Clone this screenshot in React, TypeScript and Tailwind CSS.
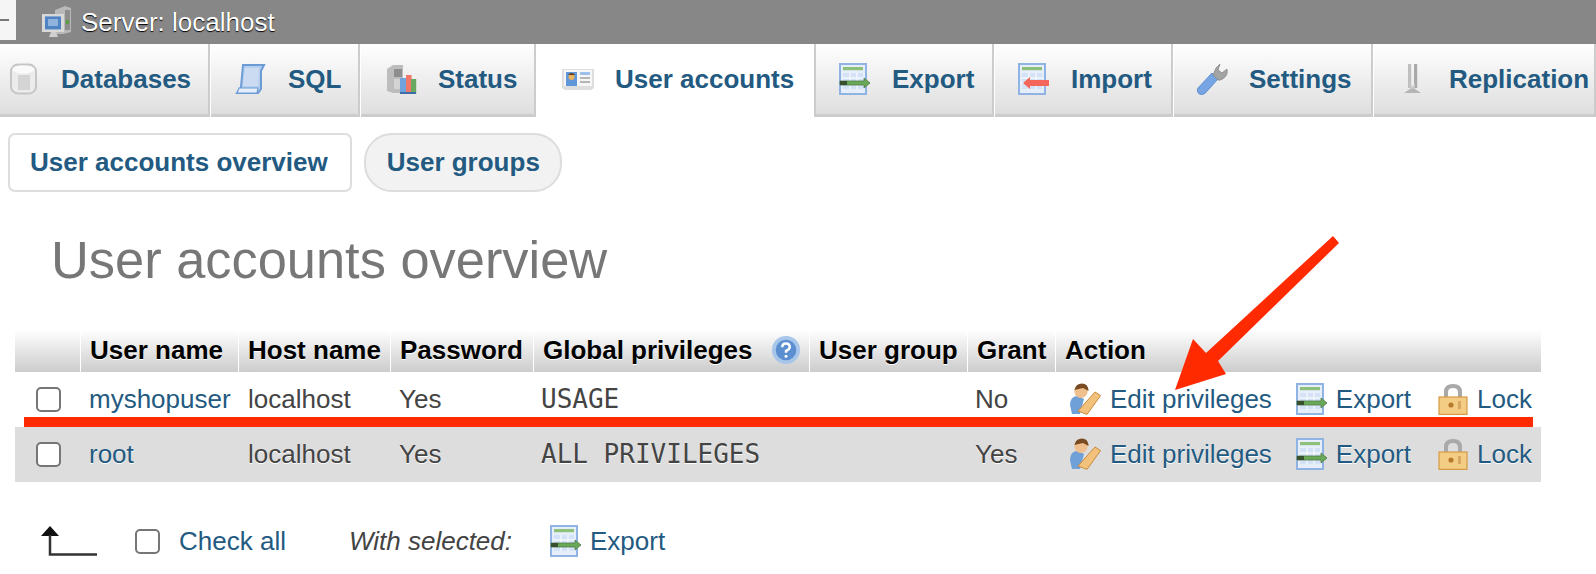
import type { ReactNode } from "react";

const LINK = "text-[#235a81]";

function Svg({ children, className = "" }: { children: ReactNode; className?: string }) {
  return (
    <svg viewBox="0 0 16 16" className={`w-[32px] h-[32px] shrink-0 blur-[0.5px] ${className}`}>
      {children}
    </svg>
  );
}

function ServerIcon() {
  return (
    <Svg>
      <path d="M7 2l5-2 3 1v12l-4 1H7z" fill="#b9b9b9" />
      <rect x="12" y="2" width="2.5" height="10" fill="#8d8d8d" />
      <rect x="12.5" y="7" width="1.4" height="2" fill="#56a03c" />
      <rect x="0.5" y="4" width="11" height="9" fill="#d8d8d8" />
      <rect x="2" y="5.2" width="8" height="6.5" fill="#4f83c4" />
      <rect x="3.5" y="6.5" width="5" height="3.5" fill="#8fb3dc" />
      <path d="M5 13h2.5l1 2.5H4z" fill="#cfcfcf" />
    </Svg>
  );
}

function DatabaseIcon() {
  return (
    <Svg>
      <rect x="1.5" y="0.8" width="12.5" height="14.4" rx="3.5" fill="#ececec" stroke="#c6c6c6" />
      <ellipse cx="7.700" cy="3.200" rx="5.500" ry="2" fill="#fafafa" />
      <rect x="5" y="6" width="6" height="7.500" fill="#d4d4d4" />
    </Svg>
  );
}

function SqlIcon() {
  return (
    <Svg>
      <path d="M4 1h10.500l-1.500 3v9l-1.500 2H1l2-3z" fill="#b7cfee" stroke="#6d9bd6" strokeWidth="1" />
      <path d="M5 2.500h7l-.5 9H4z" fill="#cbdcf2" />
      <path d="M1 15l1-2.500h9.500L11 15z" fill="#e4eefa" stroke="#6d9bd6" strokeWidth=".6" />
    </Svg>
  );
}

function StatusIcon() {
  return (
    <Svg>
      <path d="M1 3l3-2h5v14H4l-3-1z" fill="#bdbdbd" />
      <rect x="4.500" y="3" width="4" height="4" fill="#8e8e8e" />
      <rect x="4.500" y="8" width="4" height="5" fill="#d4d4d4" />
      <rect x="7.500" y="7.500" width="3" height="8" fill="#6fa3dd" />
      <rect x="10.500" y="6" width="2.800" height="9.500" fill="#f0776a" />
      <rect x="13" y="8" width="2.600" height="7.500" fill="#69a860" />
      <rect x="7.500" y="14.500" width="8" height="1" fill="#3c6ea8" />
    </Svg>
  );
}

function CardIcon() {
  return (
    <svg viewBox="0 0 32 22" className="w-[32px] h-[22px] shrink-0 blur-[0.5px]">
      <path d="M0 1h32v19l-3 2H3l-3-2z" fill="#dedede" />
      <rect x="2" y="2" width="28" height="16" fill="#f6f6f6" />
      <rect x="4" y="4" width="11" height="14" fill="#5f97d8" />
      <circle cx="9.500" cy="9" r="3" fill="#e8b45e" />
      <path d="M6 7q3.500-4 7 0z" fill="#6a3c12" />
      <rect x="18" y="4" width="10" height="3" fill="#9cc0ea" />
      <rect x="18" y="9" width="10" height="2" fill="#b5b5b5" />
      <rect x="18" y="13" width="10" height="2" fill="#b5b5b5" />
    </svg>
  );
}

function SheetIcon({ kind }: { kind: "export" | "import" }) {
  return (
    <Svg>
      <rect x="0.500" y="0.500" width="13" height="15" fill="#e6eefa" stroke="#8fb4e4" />
      <rect x="2" y="2" width="10" height="1.600" fill="#8ec07c" />
      <path d="M2 5h10v8H2z" fill="#d3e2f6" />
      <path d="M2 7.500h10M2 10h10M5.500 5v8M9 5v8" stroke="#f4f8fd" strokeWidth=".7" />
      {kind === "export" ? (
        <>
          <path d="M0.500 9h12V7.500l3 2.500-3 2.500V11H0.500z" fill="#69a857" stroke="#4f7a45" strokeWidth=".4" />
          <rect x="0.500" y="9" width="3.500" height="2" fill="#39502f" />
        </>
      ) : (
        <path d="M15.500 8.500H6V7L2.500 10 6 13v-1.500h9.500z" fill="#f4655a" />
      )}
    </Svg>
  );
}

function WrenchIcon() {
  return (
    <Svg>
      <path d="M1 12.500L8 5l3 3-6.500 7.200q-2 1.200-3.200 0t-.3-2.700z" fill="#77a5e4" stroke="#5f8fd2" strokeWidth=".5" />
      <path d="M8.500 6l1.500-3.500L12 .5l-1 3 2 1.500 2.500-2q.5 3-1.500 4.500t-3 1z" fill="#a3a3a3" stroke="#888" strokeWidth=".4" />
    </Svg>
  );
}

function ReplicationIcon() {
  return (
    <Svg>
      <rect x="6" y="0.500" width="1.600" height="12" fill="#bfbfbf" />
      <rect x="9" y="0.500" width="1.600" height="12" fill="#a9a9a9" />
      <path d="M7 10l1.300 2 1.200-2v3H7z" fill="#c8c8c8" />
      <path d="M7 13h2.500l3 2H4z" fill="#b5b5b5" />
    </Svg>
  );
}

function EditIcon() {
  return (
    <Svg>
      <path d="M0.500 11q0-4.500 4-4.500l3 1.500-2 7.500H1.500z" fill="#6fa0d8" />
      <circle cx="6" cy="4.200" r="3.300" fill="#efc08d" />
      <path d="M2.700 3.500Q3.500 .3 6.500 .3T9.800 4L7 2.500z" fill="#7a4a22" />
      <path d="M4.500 14L13 4.500l2.800 1.800L9 15.700z" fill="#f2c27c" stroke="#c98a3c" strokeWidth=".5" />
    </Svg>
  );
}

function LockIcon() {
  return (
    <Svg>
      <path d="M3.500 7V4.500Q3.500 .5 8 .5t4.500 4V7h-2V4.700Q10.500 2.500 8 2.500T5.500 4.700V7z" fill="#a9a9a9" />
      <rect x="1" y="7" width="14" height="8.700" fill="#f3cd83" stroke="#d59a47" strokeWidth=".6" />
      <circle cx="7" cy="11" r="1.300" fill="#b77a2e" />
      <rect x="10.500" y="9" width="1.500" height="4" fill="#d8a860" />
    </Svg>
  );
}

function HelpIcon() {
  return (
    <svg viewBox="0 0 16 16" className="w-[30px] h-[30px] shrink-0 blur-[0.5px]">
      <circle cx="8" cy="8" r="7.500" fill="#a7c6ea" />
      <circle cx="8" cy="8" r="5.500" fill="#5b8fcf" />
      <path d="M6 6.500Q6 4.500 8 4.500T10 6.500Q10 7.500 8 8.500V9.500" fill="none" stroke="#fff" strokeWidth="1.300" />
      <circle cx="8" cy="11.300" r=".8" fill="#fff" />
    </svg>
  );
}

const tabs = [
  { label: "Databases", icon: <DatabaseIcon />, cls: "w-[210px] pl-[8px]" },
  { label: "SQL", icon: <SqlIcon />, cls: "w-[149px] pl-[24px]" },
  { label: "Status", icon: <StatusIcon />, cls: "w-[175px] pl-[24px]" },
  { label: "User accounts", icon: <CardIcon />, cls: "w-[276px] pl-[25px]", active: true },
  { label: "Export", icon: <SheetIcon kind="export" />, cls: "w-[180px] pl-[23px] border-l-2" },
  { label: "Import", icon: <SheetIcon kind="import" />, cls: "w-[178px] pl-[23px]" },
  { label: "Settings", icon: <WrenchIcon />, cls: "w-[199px] pl-[22px]" },
  { label: "Replication", icon: <ReplicationIcon />, cls: "flex-1 pl-[22px]" },
];

const headers = [
  { label: "", cls: "w-[65px]" },
  { label: "User name", cls: "w-[157px]" },
  { label: "Host name", cls: "w-[151px]" },
  { label: "Password", cls: "w-[142px]" },
  { label: "Global privileges", cls: "w-[275px]", help: true },
  { label: "User group", cls: "w-[157px]" },
  { label: "Grant", cls: "w-[87px]" },
  { label: "Action", cls: "flex-1" },
];

function Check() {
  return (
    <input
      type="checkbox"
      readOnly
      className="appearance-none block w-[25px] h-[25px] rounded-[5px] border-2 border-[#767676] bg-white shrink-0"
    />
  );
}

function UserRow({ name, priv, grant, alt }: { name: string; priv: string; grant: string; alt?: boolean }) {
  return (
    <div className={`flex h-[55px] items-center pb-[1px] text-[#444] ${alt ? "bg-[#dddddd] [text-shadow:0_1px_0_#fff]" : ""}`}>
      <div className="w-[66px] pl-[21px]">
        <Check />
      </div>
      <div className={`w-[158px] pl-[8px] ${LINK}`}>{name}</div>
      <div className="w-[151px] pl-[9px]">localhost</div>
      <div className="w-[144px] pl-[9px]">Yes</div>
      <div className="w-[433px] pl-[7px] font-['DejaVu_Sans_Mono',monospace] text-[26px]">{priv}</div>
      <div className="w-[88px] pl-[8px]">{grant}</div>
      <div className={`flex-1 flex items-center pl-[14px] ${LINK}`}>
        <EditIcon />
        <span className="ml-[9px]">Edit privileges</span>
        <span className="ml-[24px]">
          <SheetIcon kind="export" />
        </span>
        <span className="ml-[8px]">Export</span>
        <span className="ml-[26px]">
          <LockIcon />
        </span>
        <span className="ml-[8px]">Lock</span>
      </div>
    </div>
  );
}

export default function App() {
  return (
    <div className="relative w-[1596px] h-[574px] overflow-hidden bg-white font-['Liberation_Sans',Arial,sans-serif] text-[26px] leading-none">
      {/* server bar */}
      <div className="flex h-[44px] bg-[#878787]">
        <div className="flex items-center w-[16px] h-[40px] bg-[#f5f5f5]">
          <div className="w-[9px] h-[2px] bg-[#777]" />
        </div>
        <div className="flex items-center pl-[25px] gap-[8px] text-white [text-shadow:0_1px_1px_#000]">
          <ServerIcon />
          <span>Server: localhost</span>
        </div>
      </div>

      {/* main tabs */}
      <div className="flex h-[73px] gap-[1px]">
        {tabs.map((t) => (
          <div
            key={t.label}
            className={`flex items-center gap-[21px] font-bold ${LINK} border-b-[3px] ${t.cls} ${
              t.active
                ? "bg-white border-transparent"
                : "border-[#cccccc] border-r-2 bg-gradient-to-b from-white to-[#dedede]"
            }`}
          >
            <span className="flex justify-center w-[32px]">{t.icon}</span>
            <span>{t.label}</span>
          </div>
        ))}
      </div>

      {/* sub tabs */}
      <div className={`flex gap-[12px] pl-[8px] mt-[16px] font-bold ${LINK}`}>
        <div className="flex items-center h-[59px] pb-[2px] pl-[20px] pr-[22px] border-2 border-[#dddddd] rounded-[7px]">
          User accounts overview
        </div>
        <div className="flex items-center h-[59px] pb-[2px] pl-[21px] pr-[20px] border-2 border-[#dddddd] rounded-[28px] bg-[#f2f2f2]">
          User groups
        </div>
      </div>

      <h1 className="flex items-center h-[138px] pb-[2px] pl-[51px] text-[52.4px] font-normal text-[#777777]">
        User accounts overview
      </h1>

      {/* table */}
      <div className="ml-[15px] w-[1526px]">
        <div className="flex h-[42px] gap-[1px] font-bold text-black [text-shadow:0_1px_0_#fff]">
          {headers.map((h, i) => (
            <div
              key={i}
              className={`flex items-center pl-[9px] pb-[3px] bg-gradient-to-b from-white to-[#cccccc] ${h.cls}`}
            >
              {h.label}
              {h.help && (
                <span className="ml-[18px]">
                  <HelpIcon />
                </span>
              )}
            </div>
          ))}
        </div>
        <UserRow name="myshopuser" priv="USAGE" grant="No" />
        <UserRow name="root" priv="ALL PRIVILEGES" grant="Yes" alt />
      </div>

      {/* footer */}
      <div className="flex items-center h-[62px] mt-[28px] pl-[41px] text-[#444]">
        <svg viewBox="0 0 57 31" className="w-[57px] h-[31px] shrink-0">
          <path d="M9 0l9 10H0z" fill="#111" />
          <path d="M9 9v19.500h47" fill="none" stroke="#333" strokeWidth="2.500" />
        </svg>
        <span className="ml-[37px]">
          <Check />
        </span>
        <span className={`ml-[19px] ${LINK}`}>Check all</span>
        <span className="ml-[63px] italic">With selected:</span>
        <span className="ml-[38px]">
          <SheetIcon kind="export" />
        </span>
        <span className={`ml-[8px] ${LINK}`}>Export</span>
      </div>

      {/* red annotation */}
      <div className="absolute left-[24px] top-[417px] w-[1509px] h-[10px] bg-[#ff2a00]" />
      <svg className="absolute left-0 top-0 pointer-events-none" width="1596" height="574">
        <polygon
          points="1333,236 1339,243 1218,361 1226,374 1175,390 1193,339 1206,353"
          fill="#ff2a00"
        />
      </svg>
    </div>
  );
}
